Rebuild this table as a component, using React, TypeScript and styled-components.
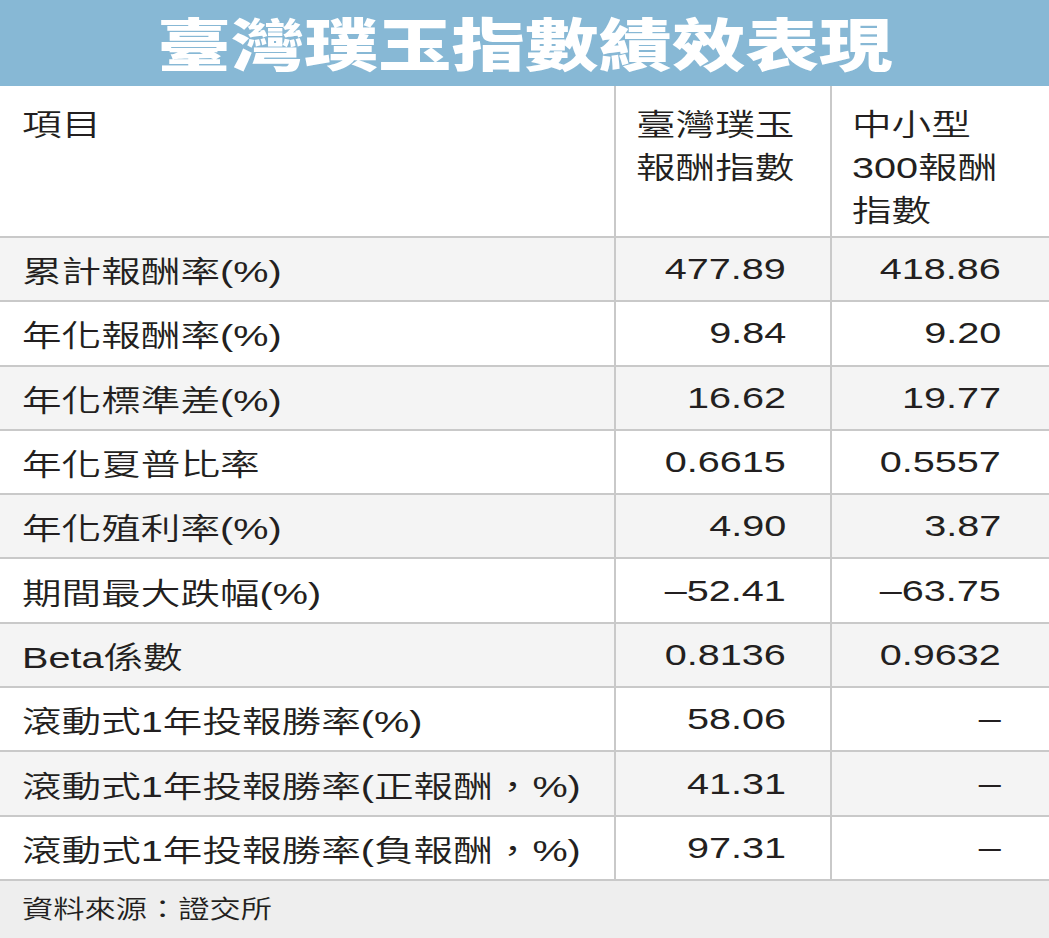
import styled, { createGlobalStyle } from 'styled-components';

const ROWS = [
  { label: '累計報酬率(%)', a: '477.89', b: '418.86' },
  { label: '年化報酬率(%)', a: '9.84', b: '9.20' },
  { label: '年化標準差(%)', a: '16.62', b: '19.77' },
  { label: '年化夏普比率', a: '0.6615', b: '0.5557' },
  { label: '年化殖利率(%)', a: '4.90', b: '3.87' },
  { label: '期間最大跌幅(%)', a: '–52.41', b: '–63.75' },
  { label: 'Beta係數', a: '0.8136', b: '0.9632' },
  { label: '滾動式1年投報勝率(%)', a: '58.06', b: '–' },
  { label: '滾動式1年投報勝率(正報酬，%)', a: '41.31', b: '–' },
  { label: '滾動式1年投報勝率(負報酬，%)', a: '97.31', b: '–' },
];

function App() {
  return (
    <Page>
      <GlobalStyle />
      <TitleBar>
        <Title>臺灣璞玉指數績效表現</Title>
      </TitleBar>
      <HeaderRow>
        <HeadCell>
          <Text>項目</Text>
        </HeadCell>
        <HeadCell $divider>
          <Text>
            臺灣璞玉
            <br />
            報酬指數
          </Text>
        </HeadCell>
        <HeadCell $divider>
          <Text>
            中小型
            <br />
            300報酬
            <br />
            指數
          </Text>
        </HeadCell>
      </HeaderRow>
      {ROWS.map((row, i) => (
        <Row key={row.label} $shaded={i % 2 === 0}>
          <LabelCell>
            <Text>{row.label}</Text>
          </LabelCell>
          <ValueCell $divider $pad={44}>
            <Text $right>{row.a}</Text>
          </ValueCell>
          <ValueCell $divider $pad={48}>
            <Text $right>{row.b}</Text>
          </ValueCell>
        </Row>
      ))}
      <Footer>
        <Source>資料來源：證交所</Source>
      </Footer>
    </Page>
  );
}

const GlobalStyle = createGlobalStyle`
  html, body {
    margin: 0;
    padding: 0;
    background: #ffffff;
  }
  body {
    font-family: "Liberation Sans", "Noto Sans CJK TC DemiLight", "Noto Sans CJK TC", sans-serif;
    color: #231f20;
  }
`;

const Page = styled.div`
  width: 1049px;
  height: 938px;
  display: flex;
  flex-direction: column;
  overflow: hidden;
`;

const TitleBar = styled.div`
  height: 86px;
  background-color: #87b8d5;
  display: flex;
  align-items: center;
  justify-content: center;
`;

const Title = styled.h1`
  margin: 0;
  font-family: "Noto Sans CJK TC", sans-serif;
  font-weight: 900;
  font-size: 57px;
  line-height: 1;
  color: #ffffff;
  transform: scaleX(1.29);
  transform-origin: center;
  padding-bottom: 4px;
`;

const Grid = styled.div`
  display: grid;
  grid-template-columns: 614px 216px 1fr;
`;

const HeaderRow = styled(Grid)`
  height: 150px;
  background: #ffffff;
`;

const Row = styled(Grid)<{ $shaded: boolean }>`
  height: 64.3px;
  box-sizing: border-box;
  border-top: 2px solid #c9c9c9;
  background: ${(p) => (p.$shaded ? '#f4f4f4' : '#ffffff')};
`;

const Cell = styled.div<{ $divider?: boolean }>`
  display: flex;
  border-left: ${(p) => (p.$divider ? '2px solid #c9c9c9' : 'none')};
  min-width: 0;
`;

const HeadCell = styled(Cell)`
  align-items: flex-start;
  padding: 17px 0 0 ${(p) => (p.$divider ? '20px' : '22px')};
  line-height: 43px;
`;

const LabelCell = styled(Cell)`
  align-items: center;
  padding-left: 22px;
`;

const ValueCell = styled(Cell)<{ $pad: number }>`
  align-items: center;
  justify-content: flex-end;
  padding-right: ${(p) => p.$pad}px;
`;

const Text = styled.span<{ $right?: boolean }>`
  display: inline-block;
  font-size: 30px;
  font-weight: 400;
  white-space: nowrap;
  transform: scaleX(1.32);
  transform-origin: ${(p) => (p.$right ? 'right center' : 'left center')};
`;

const Footer = styled.div`
  flex: 1;
  box-sizing: border-box;
  border-top: 2px solid #c9c9c9;
  background: #eeeeee;
  display: flex;
  align-items: center;
  padding: 0 0 4px 22px;
`;

const Source = styled.span`
  display: inline-block;
  font-size: 25px;
  white-space: nowrap;
  transform: scaleX(1.25);
  transform-origin: left center;
`;

export default App;
